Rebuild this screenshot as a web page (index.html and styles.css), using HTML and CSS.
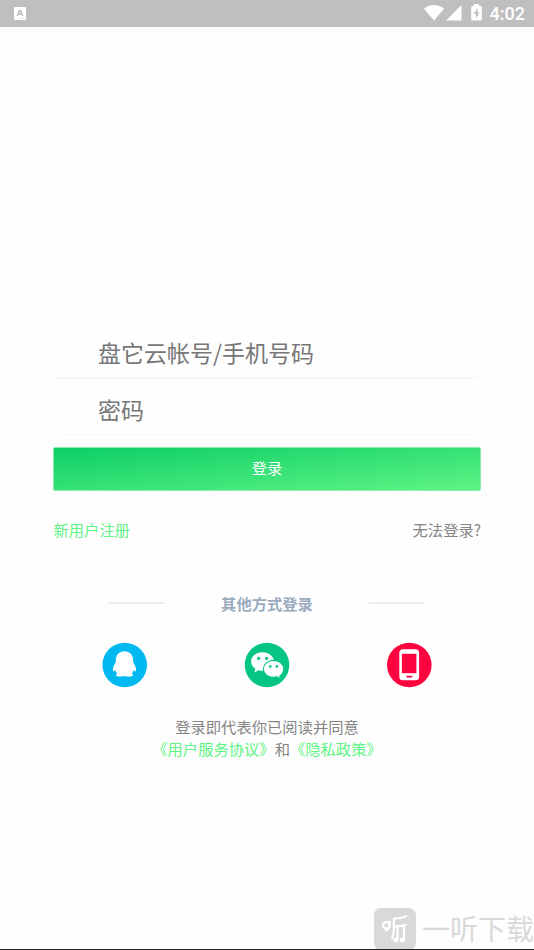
FILE: index.html
```html
<!DOCTYPE html>
<html lang="zh-CN">
<head>
<meta charset="utf-8">
<title>登录</title>
<link rel="stylesheet" href="styles.css">
</head>
<body>
<header class="status">
  <svg class="app" width="12" height="13" viewBox="0 0 12 13"><rect width="12" height="13" rx="1" fill="#fff"/><path d="M3.3 9 5.4 3.7h1.2L8.7 9M4.3 7h3.4" fill="none" stroke="#bfbfbf" stroke-width="1.5"/><path d="M6.5 11.5h4" stroke="#d0d0d0" stroke-dasharray="1 .6"/></svg>
  <div class="indicators">
    <svg class="wifi" width="20" height="16" viewBox="0 0 20 16"><path d="M0 3.7C5.8-1.1 14.2-1.1 20 3.7L10 15.6Z" fill="#fff"/></svg>
    <svg class="signal" width="16" height="16" viewBox="0 0 16 16"><path d="M0 15.5 15.5 0v15.5Z" fill="#fff"/></svg>
    <svg class="battery" width="11" height="17" viewBox="0 0 11 17"><path d="M3 0h5v2h1.8q1 0 1 1v12.6q0 1-1 1H1.2q-1 0-1-1V3q0-1 1-1H3Z" fill="#fff"/><path d="M6.8 4 2.6 9.7h2.3v4.7l3.7-6H6.5Z" fill="#bfbfbf"/></svg>
    <span class="time">4:02</span>
  </div>
</header>
<main class="login">
  <div class="field">盘它云帐号/手机号码</div>
  <div class="field second">密码</div>
  <button class="submit">登录</button>
  <div class="links"><a class="green">新用户注册</a><a>无法登录?</a></div>
  <div class="divider"><i></i><span>其他方式登录</span><i></i></div>
  <div class="providers">
    <svg width="46" height="46" viewBox="0 0 46 46"><circle cx="22.7" cy="23" r="22.3" fill="#00b9f1"/><path d="M22.5 9.2c-5.4 0-8.6 3.8-8.6 8.8 0 1.5-.2 2.5-.9 3.8-1.5 2.5-2.3 4.7-2 6.8.2 1.3 1.2.9 2.4-.5.4 1.6.9 2.5 1.9 3.6-.9.5-1.3 1-1.3 1.6 0 .9 1.6 1.3 4 1.3 2 0 3.6-.3 4.5-.9.9.6 2.5.9 4.5.9 2.4 0 4-.4 4-1.3 0-.6-.4-1.1-1.3-1.6 1-1.1 1.5-2 1.9-3.6 1.2 1.4 2.2 1.8 2.4.5.3-2.1-.5-4.3-2-6.8-.7-1.3-.9-2.3-.9-3.8 0-5-3.2-8.8-8.6-8.8Z" fill="#fff"/></svg>
    <svg width="46" height="46" viewBox="0 0 46 46"><circle cx="23" cy="23" r="22.3" fill="#05c583"/><path d="M18.5 10.2c-6.3 0-11.4 4-11.4 9.3 0 3 1.7 5.6 4.3 7.3l-1 3.6 4.1-2.2c1.2.4 2.6.6 4 .6 6.3 0 11.4-4 11.4-9.3s-5.1-9.3-11.4-9.3Z" fill="#fff"/><path d="M29.5 18.4c-5.7 0-10.1 3.8-10.1 8.5s4.4 8.5 10.1 8.5c1.2 0 2.4-.2 3.5-.5l3.7 2.1-.9-3.2c2.5-1.6 3.9-4 3.9-6.9 0-4.7-4.5-8.5-10.2-8.5Z" fill="#fff" stroke="#05c583" stroke-width="1.1"/><g fill="#05c583"><circle cx="14.6" cy="16.4" r="1.6"/><circle cx="22.7" cy="16.4" r="1.6"/><circle cx="26.2" cy="24.4" r="1.3"/><circle cx="32.8" cy="24.4" r="1.3"/></g></svg>
    <svg width="46" height="46" viewBox="0 0 46 46"><circle cx="23.3" cy="23" r="22.3" fill="#ff0240"/><rect x="13.3" y="7.3" width="19.8" height="31" rx="3.6" fill="#fff"/><path d="M15.9 11.8h14.5v19.4H15.9Z" fill="#ff0240"/><path d="M21 34.6h4.7" stroke="#ff0240" stroke-width="1.6" stroke-linecap="round"/></svg>
  </div>
  <p class="terms">登录即代表你已阅读并同意<br><a class="green">《用户服务协议》</a>和<a class="green">《隐私政策》</a></p>
</main>
<footer class="brand">
  <svg width="42" height="42" viewBox="0 0 42 42"><rect width="42" height="42" rx="7" fill="#d9d9d9"/><g fill="none" stroke="#fff" stroke-width="2.2" stroke-linecap="round"><circle cx="12.3" cy="17.4" r="3.2"/><path d="M15.5 13.5v4.5q0 3-3.8 4.2M19.8 11v11q0 5-1.6 8.7M20.2 10.5q7 .1 12-2.3M21 18.3q6 0 11-1.5M23.5 19v12.5M30 17.7v13.5"/></g><g fill="#fff"><circle cx="21.8" cy="32" r="2.3"/><circle cx="28.4" cy="32" r="2.5"/></g></svg>
  <span>一听下载</span>
</footer>
</body>
</html>
```
FILE: styles.css
```css
* { box-sizing: border-box; }
body {
  margin: 0;
  height: 950px;
  display: flex;
  flex-direction: column;
  overflow: hidden;
  background: #fefefe;
  color: #858585;
  font: 15.3px/22px "Noto Sans CJK SC", sans-serif;
  border-bottom: 1px solid #252629;
}
svg { display: block; flex: none; }
.status {
  height: 27px;
  flex: none;
  display: flex;
  justify-content: space-between;
  padding: 0 9px 0 14px;
  background: #bfbfbf;
}
.app { margin-top: 7px; }
.indicators { display: flex; }
.wifi { margin-top: 5px; }
.signal { margin: 5px 9px 0 2px; }
.battery { margin-top: 4px; }
.time {
  margin-left: 8px;
  color: #fff;
  font: 500 18px/27px Roboto, sans-serif;
}
.login {
  width: 428px;
  margin: 303px auto 0;
  display: flex;
  flex-direction: column;
}
.field {
  height: 49px;
  margin: 0 1px;
  padding-left: 44px;
  border-bottom: 2px solid #f7f7f7;
  border-radius: 5px;
  color: #777;
  font-size: 23px;
  line-height: 45px;
}
.second { margin-top: 8px; height: 48px; border-bottom-width: 1px; }
.submit {
  height: 44px;
  margin-top: 12px;
  padding: 0 0 4px;
  border: 1px solid #8cedae;
  border-radius: 2px;
  background: linear-gradient(to bottom right, #0bce66, #5ff484) border-box;
  color: #fff;
  font: inherit;
}
.links {
  display: flex;
  justify-content: space-between;
  margin-top: 27px;
  padding-left: 0.5px;
}
.green { color: #5ff484; }
.divider {
  display: flex;
  align-items: center;
  justify-content: space-between;
  width: 316px;
  margin: 52px auto 0;
  color: #9aabbd;
  font-weight: 700;
}
.divider i { width: 56px; height: 2px; background: #e9eef2; }
.providers {
  display: flex;
  justify-content: space-between;
  width: 330px;
  margin: 27.5px auto 0;
}
.terms { margin: 27.5px 0 0; text-align: center; }
.brand {
  display: flex;
  align-items: center;
  align-self: flex-end;
  gap: 6px;
  height: 41px;
  margin-top: auto;
  color: #d9d9d9;
  font-size: 28px;
  line-height: 42px;
}
.brand span { margin-top: -1px; }
```
